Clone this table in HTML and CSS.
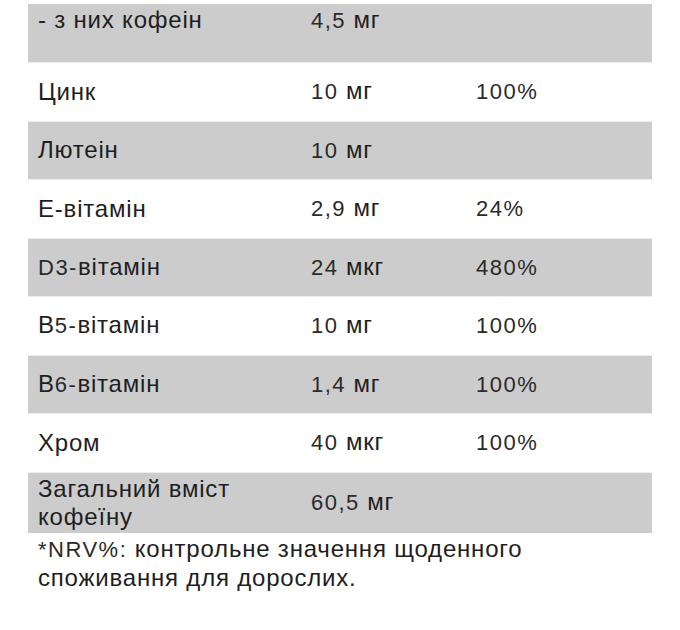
FILE: index.html
```html
<!DOCTYPE html>
<html lang="uk">
<head>
<meta charset="utf-8">
<link rel="stylesheet" href="styles.css">
</head>
<body>
<div class="wrap">
  <table class="nut">
    <colgroup>
      <col class="c1"><col class="c2"><col class="c3">
    </colgroup>
    <tbody>
      <tr class="g top"><td>- з них кофеін</td><td><span class="n">4,5</span> мг</td><td></td></tr>
      <tr><td>Цинк</td><td><span class="n">10</span> мг</td><td><span class="n">100%</span></td></tr>
      <tr class="g"><td>Лютеін</td><td><span class="n">10</span> мг</td><td></td></tr>
      <tr><td>Е-вітамін</td><td><span class="n">2,9</span> мг</td><td><span class="n">24%</span></td></tr>
      <tr class="g"><td><span class="n">D3-</span>вітамін</td><td><span class="n">24</span> мкг</td><td><span class="n">480%</span></td></tr>
      <tr><td>В<span class="n">5-</span>вітамін</td><td><span class="n">10</span> мг</td><td><span class="n">100%</span></td></tr>
      <tr class="g"><td>В<span class="n">6-</span>вітамін</td><td><span class="n">1,4</span> мг</td><td><span class="n">100%</span></td></tr>
      <tr><td>Хром</td><td><span class="n">40</span> мкг</td><td><span class="n">100%</span></td></tr>
      <tr class="g tall"><td>Загальний вміст<br>кофеїну</td><td><span class="n">60,5</span> мг</td><td></td></tr>
    </tbody>
  </table>
  <p class="note"><span class="n">*NRV%:</span> контрольне значення щоденного<br>споживання для дорослих.</p>
</div>
</body>
</html>
```

FILE: styles.css
```css
html, body {
  margin: 0;
  padding: 0;
  background: #ffffff;
}
body {
  font-family: "Liberation Sans", Arial, sans-serif;
  font-size: 24px;
  line-height: 28px;
  color: #1e1e1e;
}
.wrap {
  padding: 4px 0 0 28px;
  width: 624px;
}
.nut {
  width: 624px;
  border-collapse: collapse;
  table-layout: fixed;
}
.c1 { width: 273px; }
.c2 { width: 165px; }
.c3 { width: 186px; }
.nut tr {
  height: 58.5px;
  border-bottom: 1px solid #ececec;
}
.nut tr.g {
  background: #cccccc;
}
.nut td {
  padding: 2px 10px;
  vertical-align: middle;
  letter-spacing: 0.8px;
  white-space: nowrap;
}
.nut tr.top td {
  vertical-align: top;
}
.nut tr.tall {
  height: 60px;
  border-bottom: 0;
}
.n {
  font-size: 22px;
  letter-spacing: 1.5px;
  color: #2a2a2a;
}
.note {
  margin: 2px 0 0 0;
  padding-left: 10px;
  letter-spacing: 0.8px;
}
```
